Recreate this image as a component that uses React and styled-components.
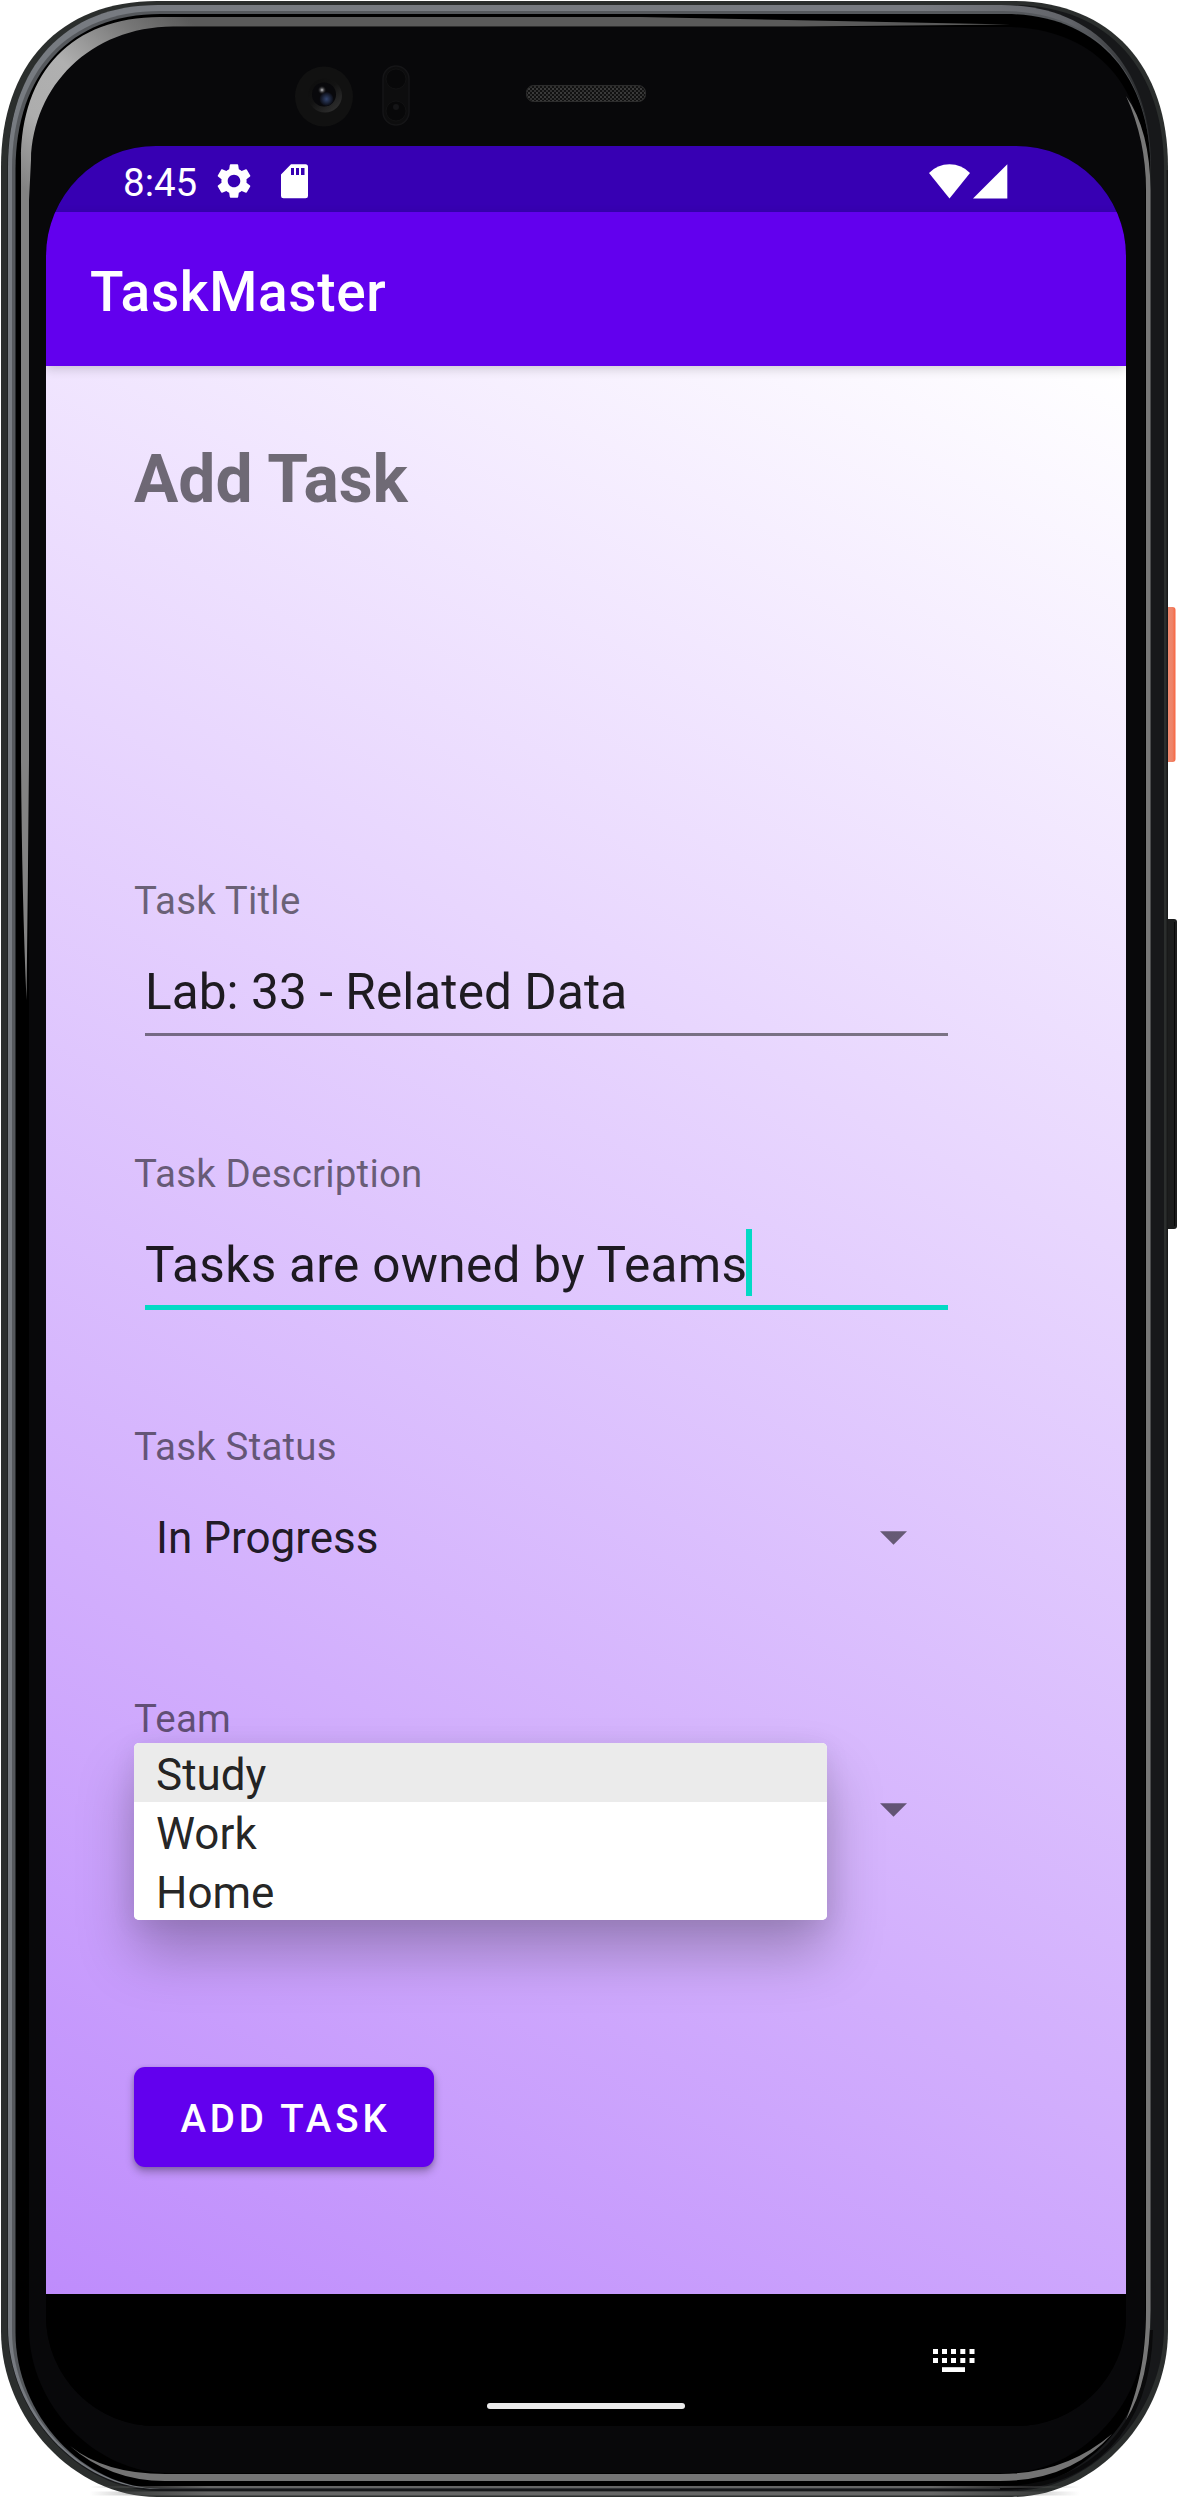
import React from "react";
import styled, { createGlobalStyle } from "styled-components";
import { MdSettings } from "react-icons/md";

const GlobalStyle = createGlobalStyle`
  *, *::before, *::after { box-sizing: border-box; }
  body { margin: 0; background: #fff; font-family: Roboto, "Noto Sans", sans-serif; }
`;

const Device = styled.div`
  position: relative;
  width: 1178px;
  height: 2498px;
  padding: 146px 52px 72px 46px;
  overflow: hidden;
`;

const Hardware = styled.svg`
  position: absolute;
  inset: 0;
  display: block;
`;

const Screen = styled.main`
  position: relative;
  display: flex;
  flex-direction: column;
  width: 1080px;
  height: 2280px;
  border-radius: 110px;
  overflow: hidden;
  background: #000;
`;

const StatusBar = styled.header`
  display: flex;
  align-items: center;
  justify-content: space-between;
  flex: 0 0 66px;
  padding: 4px 118px 0 77px;
  background: #3700b3;
  color: #fff;
`;

const StatusGroup = styled.div`
  display: flex;
  align-items: center;
  gap: ${({ $gap }) => $gap}px;
`;

const Clock = styled.time`
  width: 76px;
  padding-top: 3px;
  margin-right: 14px;
  font-size: 38.5px;
  line-height: 45px;
`;

const AppBar = styled.div`
  position: relative;
  z-index: 1;
  display: flex;
  align-items: center;
  flex: 0 0 154px;
  padding: 6px 44px 0;
  background: #6200ee;
  box-shadow: 0 3px 10px rgba(0, 0, 0, 0.17);
`;

const AppName = styled.div`
  color: #fff;
  font-size: 55px;
  font-weight: 500;
  line-height: 64px;
  letter-spacing: 0.65px;
`;

const Content = styled.section`
  flex: 1;
  padding: 75px 178px 0 88px;
  background: linear-gradient(27.67deg, #bb86fc, #fff) top / 100% 2060px no-repeat;
`;

const Heading = styled.h1`
  margin: 0 0 357px;
  color: rgba(0, 0, 0, 0.54);
  font-size: 66px;
  font-weight: 700;
  line-height: 77px;
`;

const Field = styled.div`
  position: relative;
  height: ${({ $height = 273 }) => $height}px;
`;

const Label = styled.div`
  color: rgba(0, 0, 0, 0.54);
  font-size: 38.5px;
  line-height: 51px;
  letter-spacing: 0.18px;
`;

const TextInput = styled.div`
  display: flex;
  width: 803px;
  height: ${({ $focused }) => ($focused ? 85 : 84)}px;
  margin: 26px 0 0 11px;
  padding-top: 11px;
  color: rgba(0, 0, 0, 0.87);
  font-size: 49.5px;
  line-height: 58px;
  letter-spacing: ${({ $focused }) => ($focused ? 0.32 : 0.08)}px;
  border-bottom: ${({ $focused }) =>
    $focused ? "5px solid #03dac5" : "3px solid rgba(0, 0, 0, 0.48)"};
`;

const Caret = styled.span`
  width: 6px;
  height: 67px;
  margin: -7px 0 0 -1px;
  background: #03dac5;
`;

const Spinner = styled.div`
  display: flex;
  align-items: center;
  justify-content: space-between;
  width: 773px;
  height: 52px;
  margin-top: 40px;
  padding-left: 22px;
  color: rgba(0, 0, 0, 0.87);
  font-size: 44px;
  line-height: 52px;
`;

const Menu = styled.ul`
  position: absolute;
  top: 50px;
  left: 0;
  width: 693px;
  margin: 0;
  padding: 0;
  list-style: none;
  border-radius: 5px;
  overflow: hidden;
  background: #fff;
  box-shadow: 0 34px 56px rgba(0, 0, 0, 0.25), 0 4px 26px rgba(0, 0, 0, 0.08);
`;

const MenuItem = styled.li`
  height: 59px;
  padding: 6px 22px 0;
  color: rgba(0, 0, 0, 0.87);
  font-size: 44px;
  line-height: 52px;
  background: ${({ $active }) => ($active ? "#ebebeb" : "#fff")};
`;

const SubmitButton = styled.button`
  display: block;
  width: 300px;
  height: 100px;
  margin: 101px 0 0;
  padding: 2px 0 0 3px;
  border: 0;
  border-radius: 11px;
  background: #6200ee;
  box-shadow: 0 5px 8px rgba(0, 0, 0, 0.28), 0 1px 4px rgba(0, 0, 0, 0.15);
  color: #fff;
  font: 500 38.5px/45px Roboto, "Noto Sans", sans-serif;
  letter-spacing: 3.85px;
`;

const NavBar = styled.nav`
  display: grid;
  grid-template-columns: 441px 198px 1fr;
  flex: 0 0 132px;
  background: #000;
`;

const HomeHandle = styled.span`
  grid-column: 2;
  align-self: end;
  height: 6px;
  margin-bottom: 17px;
  border-radius: 3px;
  background: #ebebeb;
`;

const ImeSwitch = styled.span`
  margin: 55px 0 0 248px;
`;

/* Rounded slab outline; the lower corners are slightly rounder than the upper ones. */
const shell = (l, t, r, b, rx, ry, k = 0.38, kb = 0.47) => {
  const kx = rx * k;
  const ky = ry * k;
  const bx = rx * kb;
  const by = ry * kb;
  return `M${l + rx} ${t}H${r - rx}C${r - kx} ${t} ${r} ${t + ky} ${r} ${t + ry}V${b - ry}C${r} ${b - by} ${r - bx} ${b} ${r - rx} ${b}H${l + rx}C${l + bx} ${b} ${l} ${b - by} ${l} ${b - ry}V${t + ry}C${l} ${t + ky} ${l + kx} ${t} ${l + rx} ${t}Z`;
};

function PhoneHardware() {
  return (
    <Hardware width="1178" height="2498" viewBox="0 0 1178 2498" aria-hidden="true">
      <defs>
        <linearGradient id="metal" x1="0" y1="0" x2="1" y2="0">
          <stop offset="0" stopColor="#777b81" />
          <stop offset="0.8" stopColor="#777a80" />
          <stop offset="0.93" stopColor="#626469" />
          <stop offset="0.985" stopColor="#303234" />
          <stop offset="1" stopColor="#2b2d2f" />
        </linearGradient>
        <linearGradient id="lowerEdge" gradientUnits="userSpaceOnUse" x1="90" y1="0" x2="1080" y2="0">
          <stop offset="0" stopColor="#666" stopOpacity="0" />
          <stop offset="0.12" stopColor="#666" />
          <stop offset="0.85" stopColor="#666" />
          <stop offset="1" stopColor="#666" stopOpacity="0" />
        </linearGradient>
        <linearGradient id="bevel" gradientUnits="userSpaceOnUse" x1="25" y1="190" x2="190" y2="20">
          <stop offset="0" stopColor="#828282" />
          <stop offset="0.25" stopColor="#adadad" />
          <stop offset="0.5" stopColor="#b0b0b0" />
          <stop offset="0.8" stopColor="#777" />
          <stop offset="1" stopColor="#5a5a5a" />
        </linearGradient>
        <linearGradient id="power" x1="0" y1="0" x2="1" y2="0">
          <stop offset="0" stopColor="#e45f42" />
          <stop offset="0.3" stopColor="#f08a70" />
          <stop offset="0.75" stopColor="#ee8368" />
          <stop offset="1" stopColor="#f9663f" />
        </linearGradient>
        <linearGradient id="lensRing" x1="0" y1="0" x2="0.8" y2="1">
          <stop offset="0" stopColor="#0c0c0c" />
          <stop offset="0.5" stopColor="#131313" />
          <stop offset="1" stopColor="#303030" />
        </linearGradient>
        <radialGradient id="lensBlue">
          <stop offset="0" stopColor="#33456e" />
          <stop offset="1" stopColor="#0a0b12" />
        </radialGradient>
        <radialGradient id="lensGlint">
          <stop offset="0" stopColor="#c9c9cc" />
          <stop offset="1" stopColor="#0a0a0d" stopOpacity="0" />
        </radialGradient>
        <pattern id="mesh" width="4" height="4" patternUnits="userSpaceOnUse">
          <rect width="4" height="4" fill="#111" />
          <rect width="2" height="2" fill="#3a3a3a" />
          <rect x="2" y="2" width="2" height="2" fill="#303030" />
        </pattern>
      </defs>

      <rect x="1163" y="607" width="12.5" height="155" rx="3" fill="url(#power)" />
      <rect x="1163" y="919" width="14" height="310" rx="3" fill="#1c1d1d" />
      <path d="M1174.5 922V1226" stroke="#070707" strokeWidth="1" />

      <path d={shell(1, 1, 1168, 2497, 156, 166)} fill="#2b2e2d" />
      <rect x="90" y="2491.5" width="990" height="4" fill="url(#lowerEdge)" />
      <path d={shell(7.5, 5, 1164, 2491, 152, 164)} fill="#17181a" />
      <path d={shell(8, 5, 1151, 2489, 150, 162)} fill="url(#metal)" />
      <path d={shell(12, 11, 1150.5, 2488.5, 148, 158)} fill="#55585c" />
      <path d={shell(15.5, 14, 1150.5, 2488.5, 145, 156)} fill="#000" />
      <path d="M1151 2330C1149 2430 1090 2488 1000 2488" fill="none" stroke="#0a0a0b" strokeWidth="4" />
      <rect x="90" y="2486" width="990" height="2" fill="url(#lowerEdge)" />
      <path d={shell(29, 27, 1145, 2473, 140, 145)} fill="#08080a" />
      <path
        d="M21 160C21 72 72 17 160 17H640L1010 24.5L800 26.5H173C90 27 33 86 31 160L29 200V760Q28 880 26.5 1000Q22 900 21 760Z"
        fill="url(#bevel)"
      />
      <path
        d="M1126 96Q1146 140 1146 190V2310C1146 2360 1137 2392 1126 2420Q1150 2382 1150.5 2310V190Q1150 130 1126 96Z"
        fill="#777"
      />
      <path
        d="M70 2446Q105 2474 165 2474H1000Q1065 2474 1112 2434Q1070 2481 1000 2481H165Q110 2481 70 2446Z"
        fill="#747474"
      />
      <path d="M1167.2 170V2320" stroke="#111" strokeWidth="1" />

      <ellipse cx="324" cy="96.5" rx="29" ry="30" fill="#111" />
      <circle cx="325" cy="95.5" r="17" fill="url(#lensRing)" />
      <circle cx="324" cy="94.5" r="12" fill="#08080b" />
      <circle cx="326.5" cy="99" r="7" fill="url(#lensBlue)" />
      <circle cx="322" cy="90" r="4.5" fill="url(#lensGlint)" />

      <rect x="383" y="66" width="26" height="59" rx="13" fill="#0d0d0e" stroke="#151517" strokeWidth="1.5" />
      <circle cx="396" cy="79" r="10" fill="#080809" stroke="#121213" />
      <circle cx="396" cy="111" r="10" fill="#080809" stroke="#121213" />
      <circle cx="396" cy="107" r="3" fill="#151517" />

      <rect x="526.5" y="85.5" width="119" height="16" rx="7" fill="url(#mesh)" stroke="#2c2c2c" />
    </Hardware>
  );
}

const SdCardIcon = () => (
  <svg width="27" height="35" viewBox="0 0 27 35">
    <path
      fill="#fff"
      fillRule="evenodd"
      d="M10 0.3H24.5Q27 0.3 27 2.8V32Q27 34.3 24.5 34.3H2.5Q0 34.3 0 32V10.5ZM10 4V11H13V4ZM15 4V11H18V4ZM20 4V11H23.5V4Z"
    />
  </svg>
);

const WifiIcon = () => (
  <svg width="41" height="35" viewBox="0 0 41 35">
    <path fill="#fff" d="M20.5 34.5 0 9Q8.5 0.3 20.5 0.3T41 9Z" />
  </svg>
);

const SignalIcon = () => (
  <svg width="35" height="35" viewBox="0 0 35 35">
    <path fill="#fff" d="M0 34.5 34.3 0.3V34.5Z" />
  </svg>
);

const DropArrow = () => (
  <svg width="27" height="14" viewBox="0 0 27 14">
    <path fill="#000" fillOpacity="0.54" d="M0 0.2H27L13.5 13.8Z" />
  </svg>
);

const KeyboardIcon = () => (
  <svg width="42" height="24" viewBox="0 0 42 24" display="block">
    {[0, 9].map((y) =>
      [0, 9, 18, 27.3, 36.5].map((x) => (
        <rect key={`${x}-${y}`} x={x} y={y} width="5" height="5" fill="#fff" />
      ))
    )}
    <rect x="9" y="18.2" width="23" height="4.8" fill="#fff" />
  </svg>
);

export default function App() {
  return (
    <>
      <GlobalStyle />
      <Device>
        <PhoneHardware />
        <Screen>
          <StatusBar>
            <StatusGroup $gap={0}>
              <Clock>8:45</Clock>
              <StatusGroup $gap={26}>
                <MdSettings size={42} color="#fff" />
                <SdCardIcon />
              </StatusGroup>
            </StatusGroup>
            <StatusGroup $gap={3}>
              <WifiIcon />
              <SignalIcon />
            </StatusGroup>
          </StatusBar>

          <AppBar>
            <AppName>TaskMaster</AppName>
          </AppBar>

          <Content>
            <Heading>Add Task</Heading>
            <Field>
              <Label>Task Title</Label>
              <TextInput>Lab: 33 - Related Data</TextInput>
            </Field>
            <Field>
              <Label>Task Description</Label>
              <TextInput $focused>
                Tasks are owned by Teams
                <Caret />
              </TextInput>
            </Field>
            <Field $height={272}>
              <Label>Task Status</Label>
              <Spinner>
                <span>In Progress</span>
                <DropArrow />
              </Spinner>
            </Field>
            <Field>
              <Label>Team</Label>
              <Spinner>
                <span />
                <DropArrow />
              </Spinner>
              <Menu>
                <MenuItem $active>Study</MenuItem>
                <MenuItem>Work</MenuItem>
                <MenuItem>Home</MenuItem>
              </Menu>
            </Field>
            <SubmitButton type="button">ADD TASK</SubmitButton>
          </Content>

          <NavBar>
            <HomeHandle />
            <ImeSwitch>
              <KeyboardIcon />
            </ImeSwitch>
          </NavBar>
        </Screen>
      </Device>
    </>
  );
}
